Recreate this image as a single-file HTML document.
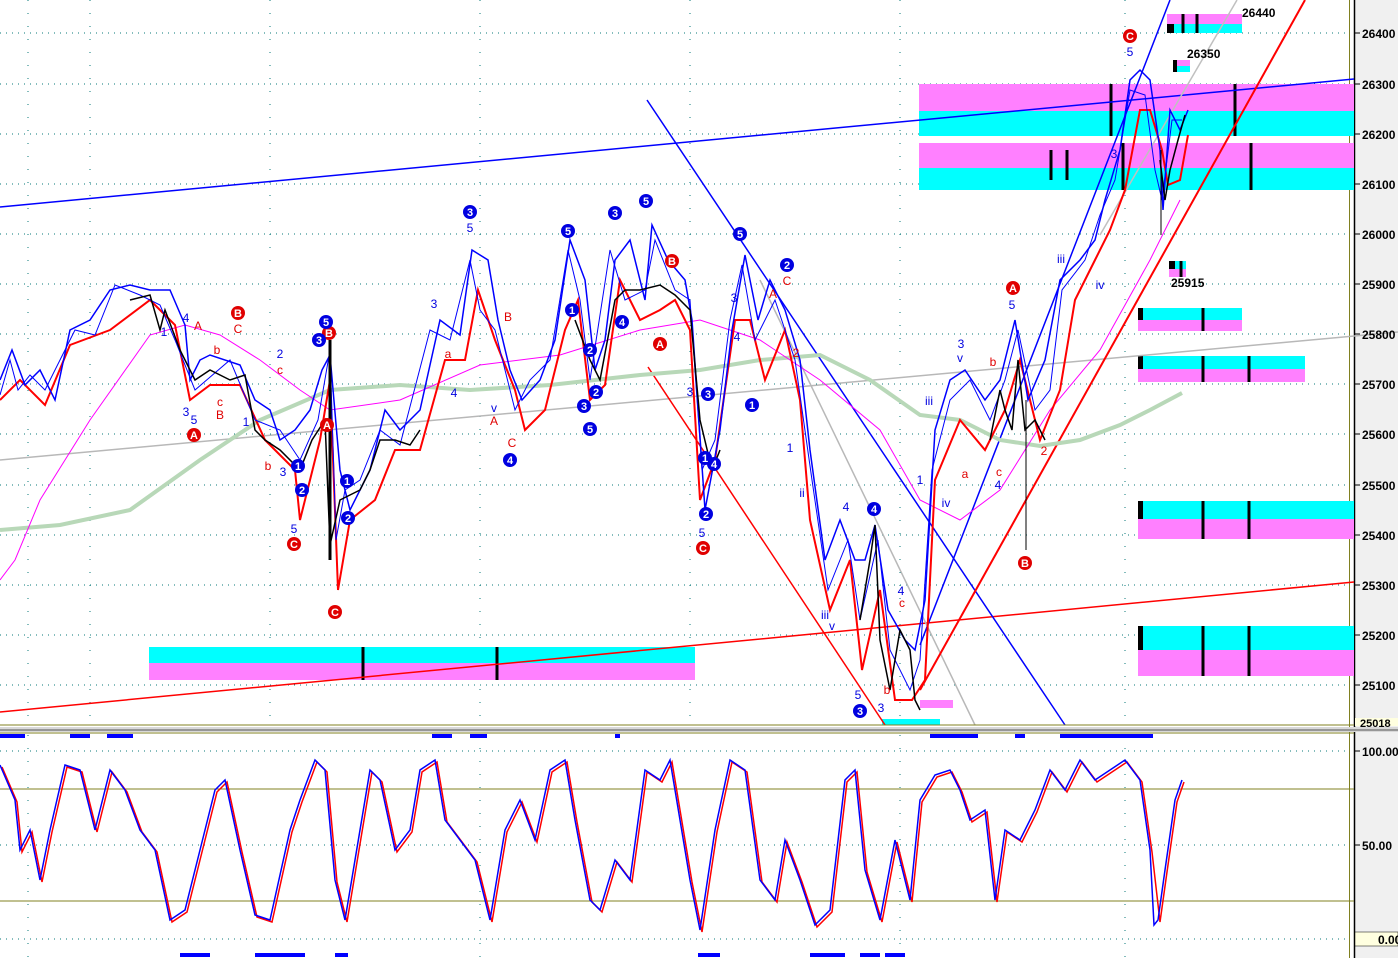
<!DOCTYPE html>
<html><head><meta charset="utf-8"><style>
body{margin:0;width:1398px;height:958px;overflow:hidden;background:#fff;font-family:"Liberation Sans",sans-serif}
svg{display:block}
text{font-family:"Liberation Sans",sans-serif}
</style></head><body>
<svg width="1398" height="958" viewBox="0 0 1398 958">
<rect x="0" y="0" width="1398" height="958" fill="#fff"/>
<rect x="1354" y="0" width="44" height="958" fill="#f0f0f0"/>
<line x1="1349.5" y1="0" x2="1349.5" y2="958" stroke="#808020" stroke-width="1"/>
<line x1="1354.5" y1="0" x2="1354.5" y2="958" stroke="#000" stroke-width="1.5"/>
<g stroke="#0a7a7a" stroke-width="1" stroke-dasharray="1,5">
<line x1="0" y1="33" x2="1349" y2="33"/><line x1="0" y1="84" x2="1349" y2="84"/><line x1="0" y1="134" x2="1349" y2="134"/><line x1="0" y1="184" x2="1349" y2="184"/><line x1="0" y1="234" x2="1349" y2="234"/><line x1="0" y1="284" x2="1349" y2="284"/><line x1="0" y1="334" x2="1349" y2="334"/><line x1="0" y1="384" x2="1349" y2="384"/><line x1="0" y1="434" x2="1349" y2="434"/><line x1="0" y1="485" x2="1349" y2="485"/><line x1="0" y1="535" x2="1349" y2="535"/><line x1="0" y1="585" x2="1349" y2="585"/><line x1="0" y1="635" x2="1349" y2="635"/><line x1="0" y1="685" x2="1349" y2="685"/>
<line x1="0" y1="751" x2="1349" y2="751"/><line x1="0" y1="845" x2="1349" y2="845"/><line x1="0" y1="939" x2="1349" y2="939"/>
</g>
<g stroke="#0a7a7a" stroke-width="1" stroke-dasharray="1,12">
<line x1="28" y1="0" x2="28" y2="725"/><line x1="90" y1="0" x2="90" y2="725"/><line x1="270" y1="0" x2="270" y2="725"/><line x1="480" y1="0" x2="480" y2="725"/><line x1="690" y1="0" x2="690" y2="725"/><line x1="900" y1="0" x2="900" y2="725"/><line x1="1125" y1="0" x2="1125" y2="725"/>
<line x1="28" y1="735" x2="28" y2="958"/><line x1="480" y1="735" x2="480" y2="958"/><line x1="900" y1="735" x2="900" y2="958"/><line x1="1125" y1="735" x2="1125" y2="958"/>
</g>
<rect x="919" y="84" width="435" height="27" fill="#ff80ff"/>
<rect x="919" y="111" width="435" height="25" fill="#00ffff"/>
<rect x="919" y="143" width="435" height="25" fill="#ff80ff"/>
<rect x="919" y="168" width="435" height="22" fill="#00ffff"/>
<rect x="1167" y="14" width="75" height="10" fill="#ff80ff"/>
<rect x="1167" y="24" width="75" height="9" fill="#00ffff"/>
<rect x="1167" y="24" width="7" height="9" fill="#000"/>
<rect x="1173" y="60" width="17" height="6" fill="#ff80ff"/><rect x="1173" y="66" width="17" height="6" fill="#00ffff"/><rect x="1173" y="60" width="4" height="12" fill="#000"/>
<rect x="1169" y="261" width="17" height="8" fill="#00ffff"/><rect x="1169" y="269" width="17" height="8" fill="#ff80ff"/><rect x="1169" y="261" width="6" height="8" fill="#000"/>
<rect x="1138" y="308" width="104" height="12" fill="#00ffff"/><rect x="1138" y="320" width="104" height="11" fill="#ff80ff"/><rect x="1138" y="308" width="5" height="12" fill="#000"/>
<rect x="1138" y="356" width="167" height="13" fill="#00ffff"/><rect x="1138" y="369" width="167" height="13" fill="#ff80ff"/><rect x="1138" y="356" width="5" height="13" fill="#000"/>
<rect x="1138" y="501" width="216" height="18" fill="#00ffff"/><rect x="1138" y="519" width="216" height="20" fill="#ff80ff"/><rect x="1138" y="501" width="5" height="18" fill="#000"/>
<rect x="1138" y="626" width="216" height="24" fill="#00ffff"/><rect x="1138" y="650" width="216" height="26" fill="#ff80ff"/><rect x="1138" y="626" width="5" height="24" fill="#000"/>
<rect x="149" y="647" width="546" height="16" fill="#00ffff"/><rect x="149" y="663" width="546" height="17" fill="#ff80ff"/>
<rect x="920" y="700" width="33" height="8" fill="#ff80ff"/><rect x="882" y="719" width="58" height="6" fill="#00ffff"/>
<g stroke="#000" stroke-width="3">
<line x1="1183" y1="14" x2="1183" y2="33"/><line x1="1197" y1="14" x2="1197" y2="33"/>
<line x1="1203" y1="308" x2="1203" y2="331"/><line x1="1203" y1="356" x2="1203" y2="382"/><line x1="1249" y1="356" x2="1249" y2="382"/>
<line x1="1203" y1="501" x2="1203" y2="539"/><line x1="1249" y1="501" x2="1249" y2="539"/>
<line x1="1203" y1="626" x2="1203" y2="676"/><line x1="1249" y1="626" x2="1249" y2="676"/>
<line x1="363" y1="647" x2="363" y2="680"/><line x1="497" y1="647" x2="497" y2="680"/>
<line x1="1111" y1="84" x2="1111" y2="136"/><line x1="1235" y1="84" x2="1235" y2="136"/>
<line x1="1051" y1="150" x2="1051" y2="180"/><line x1="1067" y1="150" x2="1067" y2="180"/><line x1="1123" y1="143" x2="1123" y2="190"/><line x1="1251" y1="143" x2="1251" y2="190"/>
<line x1="1181" y1="261" x2="1181" y2="277"/>
</g>
<g fill="none" stroke-width="1.5">
<line x1="0" y1="207" x2="1354" y2="79" stroke="#0000ff"/>
<line x1="0" y1="712" x2="1354" y2="582" stroke="#ff0000"/>
<line x1="0" y1="460" x2="1398" y2="332" stroke="#b8b8b8"/>
<line x1="647" y1="100" x2="1065" y2="725" stroke="#0000ff"/>
<line x1="648" y1="367" x2="885" y2="725" stroke="#ff0000"/>
<line x1="760" y1="280" x2="975" y2="725" stroke="#b8b8b8"/>
<line x1="920" y1="645" x2="1170" y2="0" stroke="#0000ff"/>
<line x1="920" y1="690" x2="1305" y2="0" stroke="#ff0000" stroke-width="2"/>
<line x1="1100" y1="235" x2="1237" y2="0" stroke="#c0c0c0"/>
</g>
<polyline fill="none" stroke="#b8d8b8" stroke-width="4" points="0,530 60,525 130,510 200,460 260,420 330,390 400,385 470,390 550,385 640,375 700,370 760,360 820,355 870,380 920,415 960,420 1000,440 1040,446 1080,440 1120,425 1150,410 1182,393"/>
<polyline fill="none" stroke="#ff00ff" stroke-width="1" points="0,580 15,560 40,500 90,420 150,335 185,325 220,335 260,360 300,390 330,410 400,400 480,365 560,355 640,330 700,320 760,340 820,380 880,430 920,500 960,520 1000,490 1050,410 1100,350 1150,260 1180,200"/>
<polyline fill="none" stroke="#ff0000" stroke-width="2" points="0,400 20,380 45,405 70,345 110,330 150,300 175,325 190,400 210,385 240,385 265,440 295,470 300,520 320,440 330,380 338,590 350,520 375,500 395,450 420,450 445,360 465,360 478,290 495,340 515,390 525,430 545,410 565,330 578,300 590,400 605,385 620,280 640,320 660,310 675,300 690,330 700,500 715,460 735,320 750,320 765,380 785,330 800,400 810,520 830,610 850,560 862,670 880,590 895,700 912,700 925,680 935,480 960,420 985,450 1005,410 1020,360 1040,440 1060,390 1075,300 1095,260 1110,230 1125,190 1140,110 1150,110 1162,150 1168,185 1180,180 1188,135"/>
<polyline fill="none" stroke="#0000ff" stroke-width="1.5" points="0,380 12,350 25,385 40,370 55,400 70,330 90,320 110,290 130,285 150,290 170,290 185,325 190,380 200,360 210,355 240,365 255,400 270,410 280,440 295,430 310,410 322,370 330,355 340,470 350,510 370,470 385,410 400,430 420,410 440,320 460,335 472,250 488,260 498,320 510,370 522,400 540,380 555,340 570,240 585,280 595,370 605,340 615,260 630,240 645,300 652,225 668,260 685,280 692,320 705,510 720,430 732,330 745,255 758,320 770,280 785,310 800,360 810,450 825,560 840,520 855,560 865,560 875,525 888,610 905,640 915,650 925,600 935,430 950,380 965,370 985,400 1000,380 1015,320 1028,400 1045,360 1060,280 1080,260 1095,240 1105,200 1120,150 1130,80 1140,70 1150,80 1160,150 1163,210 1170,110 1180,130 1188,110"/>
<polyline fill="none" stroke="#0000ff" stroke-width="1" points="0,395 10,360 18,390 30,375 45,390 60,360 75,330 95,335 115,285 140,295 160,305 175,340 195,390 230,360 255,420 280,430 300,460 318,420 330,350 336,540 345,490 360,480 380,430 400,445 430,330 450,340 470,260 480,310 495,330 515,410 530,380 550,360 568,250 580,300 590,380 610,250 625,300 645,290 655,240 675,290 690,300 702,470 715,440 730,320 742,265 755,340 775,300 795,360 812,480 828,590 848,540 860,620 878,540 890,650 910,690 920,660 932,470 950,400 970,380 990,420 1005,380 1018,330 1035,410 1050,390 1062,290 1085,260 1100,215 1115,180 1130,90 1145,95 1155,170 1162,200 1172,120 1182,120"/>
<polyline fill="none" stroke="#000" stroke-width="1.5" points="130,300 150,295 160,330 165,310 180,350 195,380 210,370 230,380 245,375 255,430 265,440 280,450 300,470 312,440 325,420 330,545 340,500 360,490 370,470 380,440 395,440 410,445 420,430"/>
<polyline fill="none" stroke="#000" stroke-width="1.5" points="575,320 590,360 600,380 615,300 625,290 640,290 660,285 675,295 690,310 700,420 712,470 720,450"/>
<polyline fill="none" stroke="#000" stroke-width="1.5" points="860,620 870,560 875,525 880,640 890,690 900,630 910,650 915,700 920,710"/>
<polyline fill="none" stroke="#000" stroke-width="1.5" points="990,440 1000,390 1005,410 1012,430 1018,360 1025,430 1035,420 1045,440"/>
<polyline fill="none" stroke="#000" stroke-width="1.5" points="1160,160 1165,200 1170,170 1178,140 1185,115"/>
<line x1="1161" y1="150" x2="1161" y2="235" stroke="#000"/>
<line x1="1026" y1="400" x2="1026" y2="550" stroke="#000"/>
<line x1="330" y1="340" x2="330" y2="560" stroke="#000" stroke-width="3"/>
<g>
<g fill="#e00000"><circle cx="194" cy="435" r="7"/><circle cx="238" cy="313" r="7"/><circle cx="294" cy="544" r="7"/><circle cx="329" cy="333" r="7"/><circle cx="335" cy="612" r="7"/><circle cx="327" cy="425" r="7"/><circle cx="672" cy="261" r="7"/><circle cx="660" cy="344" r="7"/><circle cx="703" cy="548" r="7"/><circle cx="1013" cy="288" r="7"/><circle cx="1025" cy="563" r="7"/><circle cx="1130" cy="36" r="7"/></g>
<g fill="#0000e0"><circle cx="326" cy="322" r="7"/><circle cx="319" cy="340" r="7"/><circle cx="298" cy="466" r="7"/><circle cx="302" cy="490" r="7"/><circle cx="347" cy="481" r="7"/><circle cx="348" cy="518" r="7"/><circle cx="470" cy="212" r="7"/><circle cx="510" cy="460" r="7"/><circle cx="568" cy="231" r="7"/><circle cx="572" cy="310" r="7"/><circle cx="590" cy="350" r="7"/><circle cx="596" cy="392" r="7"/><circle cx="584" cy="406" r="7"/><circle cx="590" cy="429" r="7"/><circle cx="615" cy="213" r="7"/><circle cx="622" cy="322" r="7"/><circle cx="646" cy="201" r="7"/><circle cx="740" cy="234" r="7"/><circle cx="787" cy="265" r="7"/><circle cx="708" cy="394" r="7"/><circle cx="752" cy="405" r="7"/><circle cx="705" cy="458" r="7"/><circle cx="714" cy="464" r="7"/><circle cx="706" cy="514" r="7"/><circle cx="874" cy="509" r="7"/><circle cx="860" cy="711" r="7"/></g>
</g>
<g font-size="11" font-weight="bold" text-anchor="middle">
<g fill="#fff"><text x="238" y="317">B</text><text x="194" y="439">A</text><text x="294" y="548">C</text><text x="329" y="337">B</text><text x="335" y="616">C</text><text x="327" y="429">A</text><text x="672" y="265">B</text><text x="660" y="348">A</text><text x="703" y="552">C</text><text x="1013" y="292">A</text><text x="1025" y="567">B</text><text x="1130" y="40">C</text></g>
<g fill="#fff"><text x="470" y="216">3</text><text x="510" y="464">4</text><text x="568" y="235">5</text><text x="615" y="217">3</text><text x="646" y="205">5</text><text x="740" y="238">5</text><text x="787" y="269">2</text><text x="874" y="513">4</text><text x="860" y="715">3</text><text x="584" y="410">3</text><text x="590" y="433">5</text><text x="326" y="326">5</text><text x="319" y="344">3</text><text x="298" y="470">1</text><text x="302" y="494">2</text><text x="347" y="485">1</text><text x="348" y="522">2</text><text x="752" y="409">1</text><text x="708" y="398">3</text><text x="706" y="518">2</text><text x="572" y="314">1</text><text x="590" y="354">2</text><text x="596" y="396">2</text><text x="622" y="326">4</text><text x="705" y="462">1</text><text x="714" y="468">4</text></g>
</g>
<g font-size="12" text-anchor="middle">
<g fill="#0000e0"><text x="164" y="336">1</text><text x="186" y="322">4</text><text x="186" y="416">3</text><text x="194" y="424">5</text><text x="246" y="426">1</text><text x="280" y="358">2</text><text x="283" y="476">3</text><text x="294" y="533">5</text><text x="470" y="232">5</text><text x="434" y="308">3</text><text x="454" y="397">4</text><text x="494" y="412">v</text><text x="702" y="537">5</text><text x="690" y="396">3</text><text x="734" y="302">3</text><text x="737" y="341">4</text><text x="790" y="452">1</text><text x="802" y="497">ii</text><text x="846" y="511">4</text><text x="825" y="619">iii</text><text x="832" y="630">v</text><text x="858" y="699">5</text><text x="881" y="712">3</text><text x="929" y="405">iii</text><text x="946" y="507">iv</text><text x="961" y="348">3</text><text x="960" y="362">v</text><text x="998" y="489">4</text><text x="1012" y="309">5</text><text x="1061" y="263">iii</text><text x="1100" y="289">iv</text><text x="1114" y="158">3</text><text x="1130" y="56">5</text><text x="920" y="484">1</text><text x="901" y="595">4</text></g>
<g fill="#e00000"><text x="198" y="330">A</text><text x="238" y="333">C</text><text x="217" y="354">b</text><text x="220" y="406">c</text><text x="220" y="419">B</text><text x="280" y="374">c</text><text x="268" y="470">b</text><text x="448" y="358">a</text><text x="508" y="321">B</text><text x="494" y="425">A</text><text x="512" y="447">C</text><text x="787" y="285">C</text><text x="773" y="298">A</text><text x="902" y="607">c</text><text x="887" y="694">b</text><text x="965" y="478">a</text><text x="993" y="366">b</text><text x="999" y="476">c</text><text x="1044" y="455">2</text><text x="796" y="357">2</text></g>
</g>
<g font-size="12" font-weight="bold" fill="#000">
<text x="1242" y="17">26440</text><text x="1187" y="58">26350</text><text x="1171" y="287">25915</text>
</g>
<g font-size="12" font-weight="bold" fill="#000">
<text x="1362" y="38">26400</text><text x="1362" y="89">26300</text><text x="1362" y="139">26200</text><text x="1362" y="189">26100</text><text x="1362" y="239">26000</text><text x="1362" y="289">25900</text><text x="1362" y="339">25800</text><text x="1362" y="389">25700</text><text x="1362" y="439">25600</text><text x="1362" y="490">25500</text><text x="1362" y="540">25400</text><text x="1362" y="590">25300</text><text x="1362" y="640">25200</text><text x="1362" y="690">25100</text>
<text x="1362" y="756">100.00</text><text x="1362" y="850">50.00</text>
</g>
<g stroke="#000"><line x1="1354" y1="33" x2="1360" y2="33"/><line x1="1354" y1="84" x2="1360" y2="84"/><line x1="1354" y1="134" x2="1360" y2="134"/><line x1="1354" y1="184" x2="1360" y2="184"/><line x1="1354" y1="234" x2="1360" y2="234"/><line x1="1354" y1="284" x2="1360" y2="284"/><line x1="1354" y1="334" x2="1360" y2="334"/><line x1="1354" y1="384" x2="1360" y2="384"/><line x1="1354" y1="434" x2="1360" y2="434"/><line x1="1354" y1="485" x2="1360" y2="485"/><line x1="1354" y1="535" x2="1360" y2="535"/><line x1="1354" y1="585" x2="1360" y2="585"/><line x1="1354" y1="635" x2="1360" y2="635"/><line x1="1354" y1="685" x2="1360" y2="685"/><line x1="1354" y1="751" x2="1360" y2="751"/><line x1="1354" y1="845" x2="1360" y2="845"/></g>
<rect x="1355" y="718" width="43" height="8" fill="#ffffe0"/>
<text x="1360" y="727" font-size="11" font-weight="bold">25018</text>
<rect x="1355" y="932" width="43" height="14" fill="#ffffe0" stroke="#000" stroke-width="0.5"/>
<text x="1378" y="944" font-size="12" font-weight="bold">0.00</text>
<line x1="0" y1="725" x2="1354" y2="725" stroke="#808020"/>
<rect x="0" y="727" width="1398" height="5" fill="#d8d8d8"/>
<line x1="0" y1="730" x2="1398" y2="730" stroke="#808080" stroke-width="1.5"/>
<line x1="0" y1="733" x2="1354" y2="733" stroke="#808020"/>
<line x1="0" y1="789" x2="1354" y2="789" stroke="#808020"/>
<line x1="0" y1="901" x2="1354" y2="901" stroke="#808020"/>
<g fill="#0000ff">
<rect x="0" y="734" width="25" height="4"/><rect x="70" y="734" width="20" height="4"/><rect x="107" y="734" width="26" height="4"/><rect x="432" y="734" width="20" height="4"/><rect x="470" y="734" width="17" height="4"/><rect x="615" y="734" width="5" height="4"/><rect x="930" y="734" width="48" height="4"/><rect x="1015" y="734" width="10" height="4"/><rect x="1060" y="734" width="93" height="4"/>
<rect x="180" y="953" width="30" height="4"/><rect x="255" y="953" width="50" height="4"/><rect x="335" y="953" width="13" height="4"/><rect x="698" y="953" width="22" height="4"/><rect x="810" y="953" width="35" height="4"/><rect x="860" y="953" width="20" height="4"/><rect x="885" y="953" width="20" height="4"/>
</g>
<polyline fill="none" stroke="#ff0000" stroke-width="1.5" points="2,767 17,802 22,852 32,832 42,882 52,832 67,767 82,772 97,832 112,772 127,792 142,832 157,852 172,922 187,912 202,852 217,792 227,782 242,852 257,917 272,922 292,832 302,802 317,762 327,772 337,882 347,922 357,862 372,772 382,782 397,852 412,832 422,772 437,762 447,822 462,842 477,862 492,922 507,832 522,802 537,842 552,772 567,762 577,822 592,902 602,912 617,862 632,882 647,772 662,782 672,762 692,882 702,932 717,832 732,762 747,772 762,882 777,902 787,842 802,882 817,927 832,912 847,782 857,772 867,872 882,922 897,842 912,902 922,802 937,777 952,772 962,792 972,822 987,812 997,902 1007,832 1022,842 1037,812 1052,772 1067,792 1082,762 1097,782 1112,772 1127,762 1142,782 1152,852 1160,922 1167,872 1177,802 1184,782"/>
<polyline fill="none" stroke="#0000ff" stroke-width="1.5" points="0,765 15,800 20,850 30,830 40,880 50,830 65,765 80,770 95,830 110,770 125,790 140,830 155,850 170,920 185,910 200,850 215,790 225,780 240,850 255,915 270,920 290,830 300,800 315,760 325,770 335,880 345,920 355,860 370,770 380,780 395,850 410,830 420,770 435,760 445,820 460,840 475,860 490,920 505,830 520,800 535,840 550,770 565,760 575,820 590,900 600,910 615,860 630,880 645,770 660,780 670,760 690,880 700,930 715,830 730,760 745,770 760,880 775,900 785,840 800,880 815,925 830,910 845,780 855,770 865,870 880,920 895,840 910,900 920,800 935,775 950,770 960,790 970,820 985,810 995,900 1005,830 1020,840 1035,810 1050,770 1065,790 1080,760 1095,780 1110,770 1125,760 1140,780 1150,850 1154,925 1158,920 1165,870 1175,800 1182,780"/>
</svg>
</body></html>
